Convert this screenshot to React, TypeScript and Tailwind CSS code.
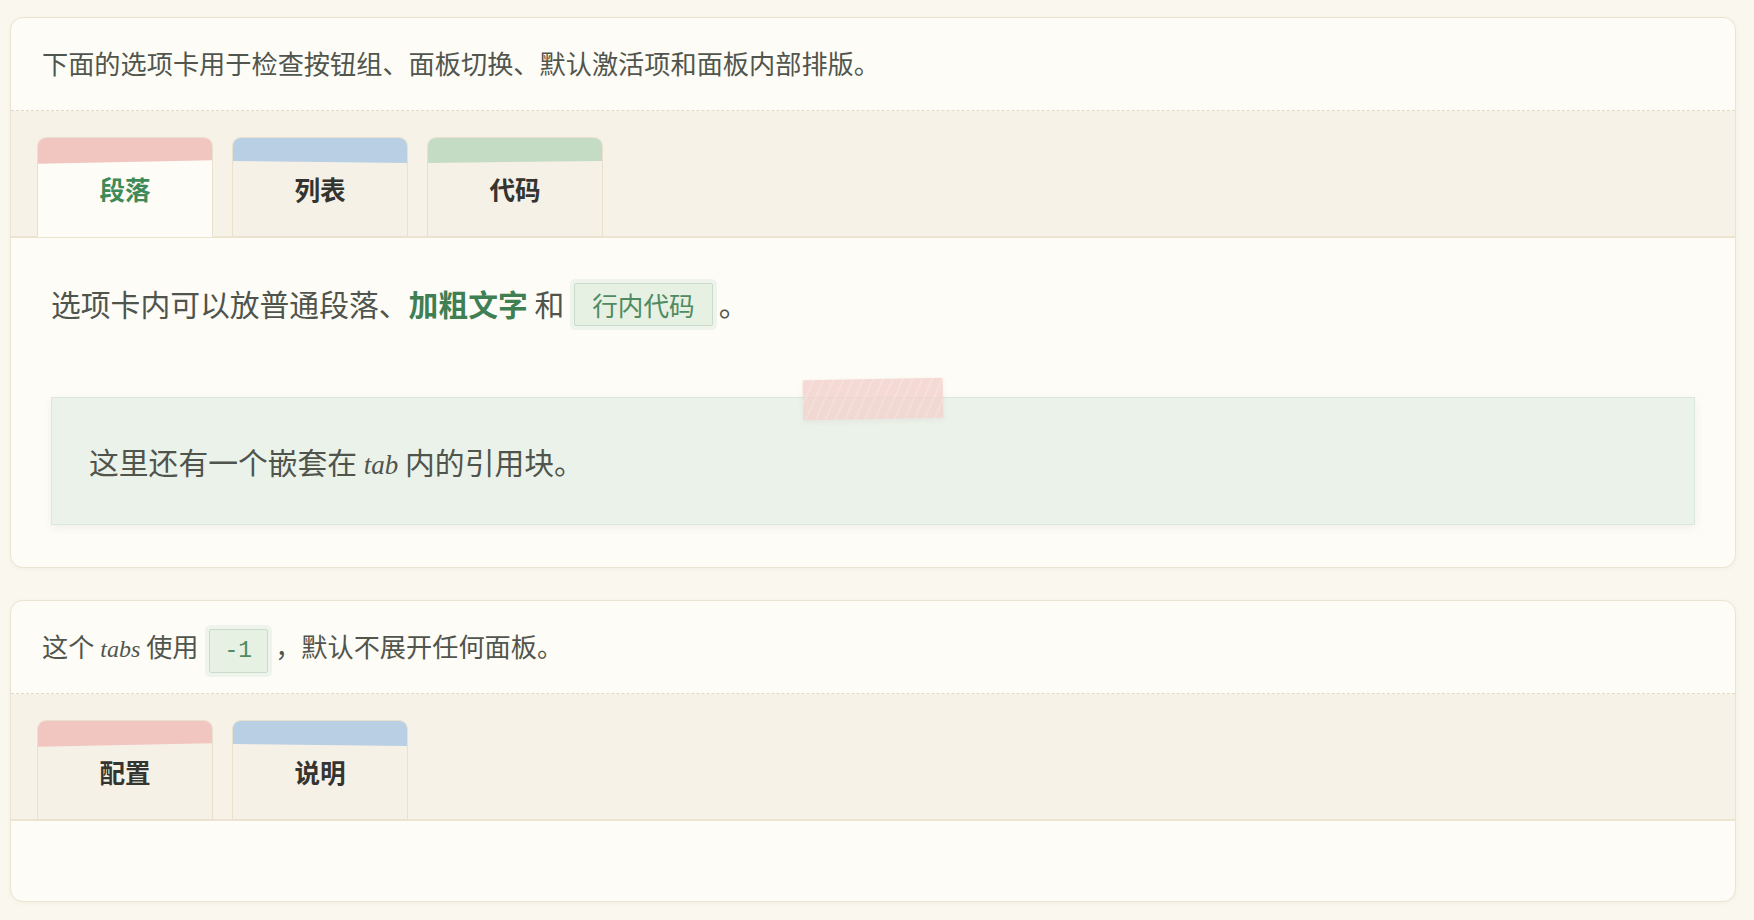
import React from "react";

type TabProps = {
  label: string;
  strip: string;
  tilt: string;
  active?: boolean;
};

// single tab with the coloured "tape" strip on top
function Tab({ label, strip, tilt, active }: TabProps) {
  return (
    <div
      className={
        "relative -mb-px flex h-[100px] w-[176px] items-center justify-center overflow-hidden rounded-t-[9px] border pt-[4px] text-[25.6px] font-bold " +
        (active
          ? "border-[#e9e1cd] border-b-[#fefcf6] bg-[#fefcf6] text-[#3f8a57]"
          : "border-[#e9e1cd] bg-[#f6f1e7] text-[#343431]")
      }
    >
      <div className={"absolute -left-[6px] -right-[6px] -top-[8px] h-[32px] " + strip + " " + tilt} />
      <span className="relative">{label}</span>
    </div>
  );
}

function Code({ children }: { children: React.ReactNode }) {
  return (
    <code className="ml-[10px] mr-[6px] rounded-[2px] border border-[#c9dcc9] bg-[#e6f0e3] px-[17px] py-[2px] text-[25.6px] text-[#4f8a61] shadow-[0_0_0_4px_#eef4ec] [font-family:'Noto_Sans_CJK_SC',sans-serif]">
      {children}
    </code>
  );
}

function Card({
  header,
  tabs,
  children,
}: {
  header: React.ReactNode;
  tabs: React.ReactNode;
  children?: React.ReactNode;
}) {
  return (
    <section className="overflow-hidden rounded-[13px] border border-[#ebe4d1] bg-[#fefcf6] shadow-[0_1px_4px_rgba(120,100,60,0.06)]">
      <div className="border-b border-dashed border-[#e3dac4] px-[31px] py-[25px] text-[26.2px] leading-[1.6] text-[#50554d]">
        {header}
      </div>
      <div className="flex items-end gap-[19px] border-b-2 border-[#ece4d1] bg-[#f6f2e8] pl-[26px] pt-[26px]">
        {tabs}
      </div>
      {children}
    </section>
  );
}

export default function App() {
  return (
    <div className="min-h-screen bg-[#faf7ee] pb-[20px] pl-[10px] pr-[18px] pt-[17px] [font-family:'Noto_Sans_CJK_SC','Noto_Sans',sans-serif]">
      <div className="flex flex-col gap-[32px]">
        <Card
          header="下面的选项卡用于检查按钮组、面板切换、默认激活项和面板内部排版。"
          tabs={
            <>
              <Tab label="段落" strip="bg-[#f1c6c1]" tilt="rotate-[-1.1deg]" active />
              <Tab label="列表" strip="bg-[#b9cfe3]" tilt="rotate-[0.7deg]" />
              <Tab label="代码" strip="bg-[#c5dcc4]" tilt="rotate-[-0.6deg]" />
            </>
          }
        >
          <div className="px-[40px] pb-[42px] pt-[42px]">
            <p className="text-[29.8px] leading-[1.6] text-[#4f544c]">
              选项卡内可以放普通段落、
              <strong className="font-bold text-[#3f7f54]">加粗文字</strong> 和
              <Code>行内代码</Code>。
            </p>
            <blockquote className="relative mt-[69px] border border-[#d9e7dc] bg-[#ebf2ea] pb-[37px] pl-[37px] pr-[34px] pt-[40px] text-[29.8px] leading-[1.6] text-[#4f544c] shadow-[0_3px_8px_rgba(90,110,90,0.09)]">
              <div className="absolute left-1/2 -top-[19px] h-[40px] w-[140px] -translate-x-1/2 rotate-[-1deg] bg-[#f3d4d0] bg-[repeating-linear-gradient(115deg,rgba(255,255,255,0.18)_0_2px,transparent_2px_9px)] opacity-85 shadow-[0_2px_5px_rgba(160,120,110,0.1)]" />
              这里还有一个嵌套在{" "}
              <em className="text-[27px] italic [font-family:'Liberation_Serif',serif]">tab</em>{" "}
              内的引用块。
            </blockquote>
          </div>
        </Card>

        <Card
          header={
            <>
              这个{" "}
              <em className="text-[24px] italic leading-none [font-family:'Liberation_Serif',serif]">tabs</em>{" "}
              使用
              <code className="ml-[10px] mr-[7px] rounded-[2px] border border-[#c9dcc9] bg-[#e6f0e3] px-[15px] py-[8px] text-[23px] leading-none text-[#4f8a61] shadow-[0_0_0_4px_#eef4ec] [font-family:'Liberation_Mono',monospace]">
                -1
              </code>
              ，默认不展开任何面板。
            </>
          }
          tabs={
            <>
              <Tab label="配置" strip="bg-[#f1c6c1]" tilt="rotate-[-1.1deg]" />
              <Tab label="说明" strip="bg-[#b9cfe3]" tilt="rotate-[0.7deg]" />
            </>
          }
        >
          <div className="h-[80px]" />
        </Card>
      </div>
    </div>
  );
}
